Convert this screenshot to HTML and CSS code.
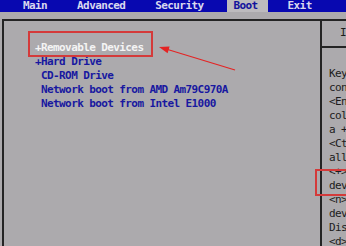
FILE: index.html
```html
<!DOCTYPE html>
<html>
<head>
<meta charset="utf-8">
<link rel="stylesheet" href="styles.css">
</head>
<body>
<div class="screen">
  <nav class="menubar">
    <span class="tab">Main</span>
    <span class="tab">Advanced</span>
    <span class="tab">Security</span>
    <span class="tab active">Boot</span>
    <span class="tab">Exit</span>
  </nav>
  <div class="frame">
    <section class="boot-list">
      <div class="item selected">+Removable Devices</div>
      <div class="item">+Hard Drive</div>
      <div class="item"> CD-ROM Drive</div>
      <div class="item"> Network boot from AMD Am79C970A</div>
      <div class="item"> Network boot from Intel E1000</div>
    </section>
    <aside class="help">
      <div class="help-title">Item Specific Help</div>
      <div class="help-body">
        <div class="line">Keys used to view or</div>
        <div class="line">configure devices:</div>
        <div class="line">&lt;Enter&gt; expands or</div>
        <div class="line">collapses devices with</div>
        <div class="line">a + or -</div>
        <div class="line">&lt;Ctrl+Enter&gt; expands</div>
        <div class="line">all</div>
        <div class="line">&lt;+&gt; and &lt;-&gt; moves the</div>
        <div class="line">device up or down.</div>
        <div class="line">&lt;n&gt; May move removable</div>
        <div class="line">device between Hard</div>
        <div class="line">Disk or Removable Disk</div>
        <div class="line">&lt;d&gt; Remove a device</div>
      </div>
    </aside>
  </div>
  <div class="mark mark-item"></div>
  <div class="mark mark-help"></div>
  <svg class="arrow" width="346" height="246" viewBox="0 0 346 246">
    <line x1="235" y1="70" x2="166" y2="49" stroke="#e42424" stroke-width="1.2"/>
    <polygon points="159,47 167.6,53.3 169.6,46.5" fill="#e42424"/>
  </svg>
</div>
</body>
</html>
```
FILE: styles.css
```css
html, body {
  margin: 0;
  padding: 0;
  width: 346px;
  height: 246px;
  overflow: hidden;
  background: #acaaad;
}

.screen {
  position: relative;
  width: 346px;
  height: 246px;
  overflow: hidden;
  font-family: "DejaVu Sans Mono", "Liberation Mono", monospace;
  font-size: 11px;
  font-weight: bold;
  letter-spacing: -0.6px;
}

.menubar {
  display: flex;
  gap: 30px;
  height: 12px;
  line-height: 12px;
  padding-left: 23px;
  background: #0808b0;
  color: #d8d8ee;
}

.tab {
  white-space: pre;
}

.tab.active {
  background: #bdbbbe;
  color: #12129c;
  padding: 0 10px 0 6px;
  margin: 0 -10px 0 -6px;
}

.frame {
  margin: 7px 0 0 2px;
  width: 400px;
  height: 240px;
  border-top: 2px solid #242424;
  border-left: 2px solid #242424;
  display: grid;
  grid-template-columns: 316px 1fr;
}

.boot-list {
  padding: 20px 0 0 31px;
  line-height: 14px;
  color: #1818a0;
}

.item {
  white-space: pre;
}

.item.selected {
  color: #f4f4f4;
}

.help {
  border-left: 2px solid #242424;
  color: #1c1c1c;
  line-height: 14px;
  font-weight: normal;
}

.help-title {
  padding: 5px 0 6px 18px;
  border-bottom: 2px solid #242424;
  white-space: pre;
}

.help-body {
  padding: 19px 0 0 7px;
}

.line {
  white-space: pre;
}

.mark {
  position: absolute;
  border: 2px solid #d43a3a;
}

.mark-item {
  left: 28px;
  top: 31px;
  width: 121px;
  height: 22px;
}

.mark-help {
  left: 315px;
  top: 169px;
  width: 40px;
  height: 23px;
}

.arrow {
  position: absolute;
  left: 0;
  top: 0;
}
```
